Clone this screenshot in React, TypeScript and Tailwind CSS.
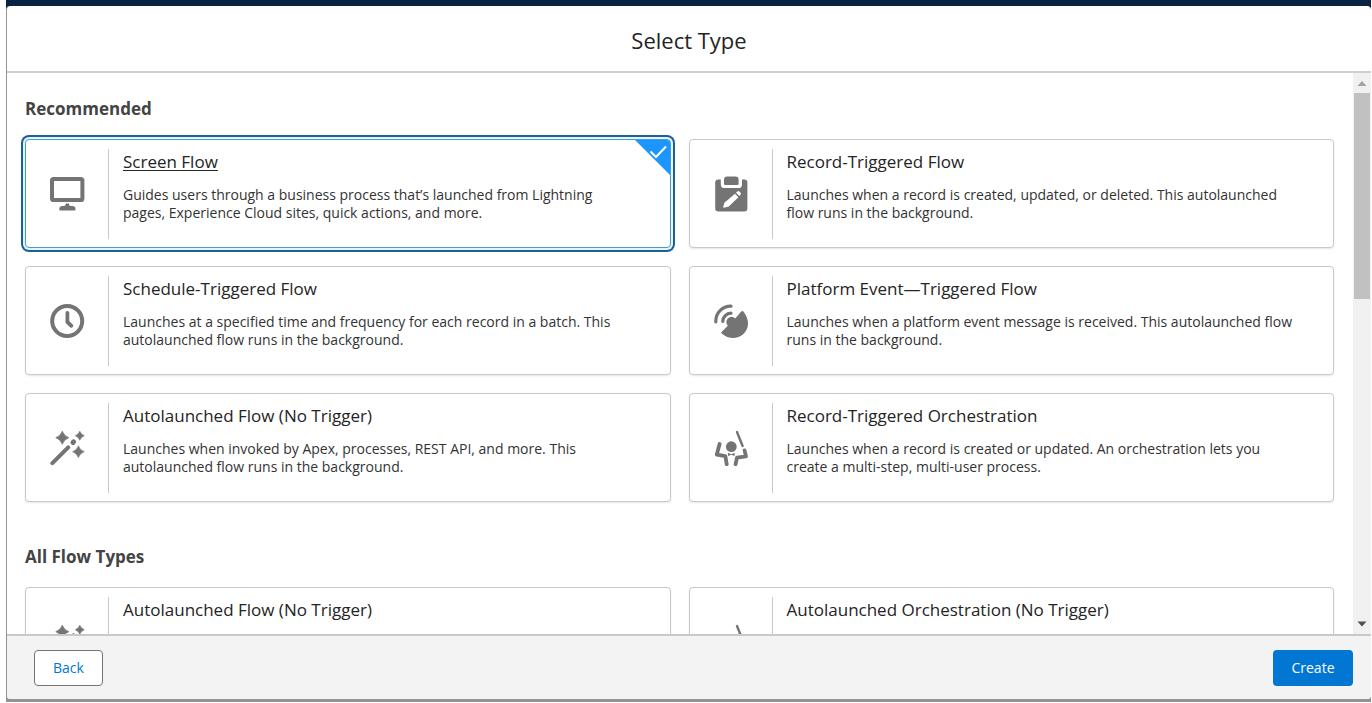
import { useState } from 'react';
import type { ReactNode } from 'react';

type FlowType = {
  id: string;
  title: string;
  description: string;
  icon: ReactNode;
};

const iconClass = 'size-9 text-[#747474]';

const ScreenIcon = () => (
  <svg viewBox="0 0 36 36" className={iconClass} fill="none" aria-hidden="true">
    <rect x="3" y="3" width="30.4" height="21" rx="1.6" stroke="currentColor" strokeWidth="4" />
    <path d="M16.6 27.400h3.4v1.2q0 1.4 1.6 1.4h1.6q3.2 0 3.4 3.2 0 1.2-1.2 1.2H11.4q-1.2 0-1.2-1.2.2-3.2 3.4-3.2H15q1.6 0 1.6-1.4z" fill="currentColor" />
  </svg>
);

const ClipboardIcon = () => (
  <svg viewBox="0 0 36 36" className={iconClass} aria-hidden="true">
    <path d="M5.4 3.400h2.4v5q0 3.6 3.6 3.6h14q3.6 0 3.6-3.6v-5h2.2q3.2 0 3.2 3.2v25.600q0 3.200-3.200 3.200H5.400q-3.200 0-3.200-3.200V6.600q0-3.200 3.200-3.200z" fill="currentColor" />
    <path d="M14.200.6h8.200q3.200 0 3.200 3.200v4q0 1.200-1.200 1.200H12.200Q11 9 11 7.800v-4Q11 .6 14.200.6z" fill="currentColor" />
    <path d="M22 17.800l3.400 3.400-9.600 9.400-5 1.200q-.8 0-.6-.8l1.200-4.200z" fill="#fff" />
    <path d="M23 16.800l1.300-1.300q1-.8 2 0l1.200 1.300q1 1 0 2l-1.200 1.300z" fill="#fff" />
  </svg>
);

const ClockIcon = () => (
  <svg viewBox="0 0 36 36" className={iconClass} fill="none" stroke="currentColor" aria-hidden="true">
    <circle cx="18.200" cy="18" r="15" strokeWidth="4" />
    <path d="M18.400 10v9l4 3.800" strokeWidth="3.800" strokeLinecap="round" strokeLinejoin="round" />
  </svg>
);

const SatelliteIcon = () => (
  <svg viewBox="0 0 36 36" className={iconClass} aria-hidden="true">
    <path d="M28.200 8.600q1.400-1.200 2.400.2C37 17 36 26 30.400 31 24.600 36.400 15.400 36.400 9 30.800q-1.200-1-.2-2l6-6a5 5 0 0 1 7.400-7.400z" fill="currentColor" />
    <path d="M18 3.200A15 15 0 0 0 2.800 18.800M18 10.200a8.400 8.400 0 0 0-8.200 8.200" fill="none" stroke="currentColor" strokeWidth="3.200" strokeLinecap="round" />
  </svg>
);

const WandIcon = () => (
  <svg viewBox="0 0 36 36" className={iconClass} fill="currentColor" aria-hidden="true">
    <path d="M3.400 33.200L19.200 17.400" stroke="currentColor" strokeWidth="4" strokeLinecap="round" />
    <path d="M24 12.400l.6-.6" stroke="currentColor" strokeWidth="5" strokeLinecap="round" />
    <path d="M13.300 1.200q1.600 4.900 6.500 6.500-4.900 1.600-6.500 6.500-1.600-4.900-6.500-6.500 4.900-1.600 6.500-6.500z" stroke="currentColor" strokeWidth=".8" strokeLinejoin="round" />
    <path d="M30.800 1.200q1.200 3.400 4.500 4.500-3.300 1.200-4.500 4.500-1.200-3.300-4.500-4.500 3.300-1.100 4.500-4.500z" stroke="currentColor" strokeWidth=".6" strokeLinejoin="round" />
    <path d="M29.400 15.800q1.500 4.400 5.800 5.900-4.300 1.500-5.800 5.900-1.500-4.400-5.800-5.900 4.300-1.500 5.800-5.900z" stroke="currentColor" strokeWidth=".6" strokeLinejoin="round" />
  </svg>
);

const ConductorIcon = () => (
  <svg viewBox="0 0 36 36" className={iconClass} fill="none" stroke="currentColor" aria-hidden="true">
    <circle cx="18.300" cy="16.700" r="5.400" fill="currentColor" stroke="none" />
    <path d="M24 2l5.600 14" strokeWidth="2.400" strokeLinecap="round" />
    <path d="M6.600 14L3.800 24.600l8.600 1.600 1.300 8" strokeWidth="3.800" strokeLinecap="round" strokeLinejoin="round" />
    <path d="M31.600 20.400l1.400 6-9 1.200-1.400 6.600" strokeWidth="3.800" strokeLinecap="round" strokeLinejoin="round" />
    <path d="M15 22.800l3.300 1.400 3.300-1.400v3.200l-3.300-1.200-3.300 1.200z" fill="currentColor" stroke="none" />
  </svg>
);

const recommended: FlowType[] = [
  {
    id: 'screen',
    title: 'Screen Flow',
    description:
      'Guides users through a business process that’s launched from Lightning pages, Experience Cloud sites, quick actions, and more.',
    icon: <ScreenIcon />,
  },
  {
    id: 'record',
    title: 'Record-Triggered Flow',
    description:
      'Launches when a record is created, updated, or deleted. This autolaunched flow runs in the background.',
    icon: <ClipboardIcon />,
  },
  {
    id: 'schedule',
    title: 'Schedule-Triggered Flow',
    description:
      'Launches at a specified time and frequency for each record in a batch. This autolaunched flow runs in the background.',
    icon: <ClockIcon />,
  },
  {
    id: 'platform',
    title: 'Platform Event—Triggered Flow',
    description:
      'Launches when a platform event message is received. This autolaunched flow runs in the background.',
    icon: <SatelliteIcon />,
  },
  {
    id: 'autolaunched',
    title: 'Autolaunched Flow (No Trigger)',
    description:
      'Launches when invoked by Apex, processes, REST API, and more. This autolaunched flow runs in the background.',
    icon: <WandIcon />,
  },
  {
    id: 'orchestration',
    title: 'Record-Triggered Orchestration',
    description:
      'Launches when a record is created or updated. An orchestration lets you create a multi-step, multi-user process.',
    icon: <ConductorIcon />,
  },
];

const allTypes: FlowType[] = [
  { id: 'all-autolaunched', title: 'Autolaunched Flow (No Trigger)', description: '', icon: <WandIcon /> },
  { id: 'all-orchestration', title: 'Autolaunched Orchestration (No Trigger)', description: '', icon: <ConductorIcon /> },
];

type CardProps = {
  flow: FlowType;
  selected: boolean;
  onSelect: (id: string) => void;
};

const FlowCard = ({ flow, selected, onSelect }: CardProps) => (
  <label
    className={`relative flex min-h-[109px] cursor-pointer rounded border bg-white pt-[9px] pb-2 ${
      selected
        ? 'border-[#4a9cc9] shadow-[0_0_0_2px_#e2f5fd,0_0_0_4px_#1c5f9b]'
        : 'border-[#c9c9c9] shadow-[0_1px_2px_rgba(0,0,0,0.1)]'
    }`}
  >
    <input
      type="radio"
      name="flow-type"
      className="sr-only"
      checked={selected}
      onChange={() => onSelect(flow.id)}
    />
    <span className="flex w-[83px] shrink-0 items-center justify-center border-r border-[#c9c9c9]">{flow.icon}</span>
    <span className="block pr-4 pl-[14px]">
      <span className={`block text-[17px] leading-[26px] text-[#242424] ${selected ? 'underline underline-offset-2' : ''}`}>
        {flow.title}
      </span>
      <span className="mt-[11px] block max-w-[510px] text-[14px] leading-[18px] text-[#333]">{flow.description}</span>
    </span>
    {selected && (
      <svg viewBox="0 0 35 35" className="absolute top-0 right-0 size-[35px]" aria-hidden="true">
        <path d="M0 0h32q3 0 3 3v32z" fill="#1b96ff" />
        <path d="M15.500 11.500l5.500 5.500L31 6.500" fill="none" stroke="#fff" strokeWidth="2" />
      </svg>
    )}
  </label>
);

const App = () => {
  const [selected, setSelected] = useState('screen');

  return (
    <div className="flex h-screen flex-col bg-white pr-px pb-px pl-1.5 font-['Open_Sans','Noto_Sans',sans-serif]">
      <div className="flex min-h-0 flex-1 flex-col bg-linear-to-b from-[#0b2343] from-50% to-[#939393] to-50% pt-1.5 pb-[3px]">
        <div role="dialog" aria-labelledby="dialog-title" className="flex min-h-0 flex-1 flex-col overflow-hidden rounded border-l border-[#939393] bg-white">
          <header className="flex h-[67px] shrink-0 items-center justify-center border-b-2 border-[#d0d0d0] pt-0.5">
            <h1 id="dialog-title" className="text-[22px] leading-7 text-[#242424]">Select Type</h1>
          </header>

          <div className="flex min-h-0 flex-1">
            <main className="min-w-0 flex-1 overflow-hidden pt-6 pr-[19px] pl-[18px]">
              <section>
                <h2 className="text-[17px] leading-6 font-bold text-[#444]">Recommended</h2>
                <div className="mt-[18px] grid grid-cols-2 gap-[18px]">
                  {recommended.map((flow) => (
                    <FlowCard key={flow.id} flow={flow} selected={selected === flow.id} onSelect={setSelected} />
                  ))}
                </div>
              </section>
              <section className="mt-[43px]">
                <h2 className="text-[17px] leading-6 font-bold text-[#444]">All Flow Types</h2>
                <div className="mt-[18px] grid grid-cols-2 gap-[18px]">
                  {allTypes.map((flow) => (
                    <FlowCard key={flow.id} flow={flow} selected={selected === flow.id} onSelect={setSelected} />
                  ))}
                </div>
              </section>
            </main>

            {/* Scrollbar */}
            <div className="flex w-[18px] shrink-0 flex-col items-center bg-[#f1f1f1]" aria-hidden="true">
              <svg viewBox="0 0 18 20" className="h-5 w-[18px] shrink-0">
                <path d="M4.500 13h9L9 8z" fill="#a3a3a3" />
              </svg>
              <div className="h-[206px] w-4 bg-[#c1c1c1]" />
              <div className="flex-1" />
              <svg viewBox="0 0 18 20" className="h-5 w-[18px] shrink-0">
                <path d="M4.500 7.500h9L9 12.500z" fill="#505050" />
              </svg>
            </div>
          </div>

          <footer className="flex h-[65px] shrink-0 items-center justify-between border-t-2 border-[#c9c9c9] bg-[#f3f3f3] pr-[18px] pl-[27px]">
            <button type="button" className="h-9 w-[69px] rounded border border-[#747474] bg-white text-[14px] text-[#0176d3]">
              Back
            </button>
            <button type="button" className="h-9 w-20 rounded bg-[#0176d3] text-[14px] text-white">
              Create
            </button>
          </footer>
        </div>
      </div>
    </div>
  );
};

export default App;
